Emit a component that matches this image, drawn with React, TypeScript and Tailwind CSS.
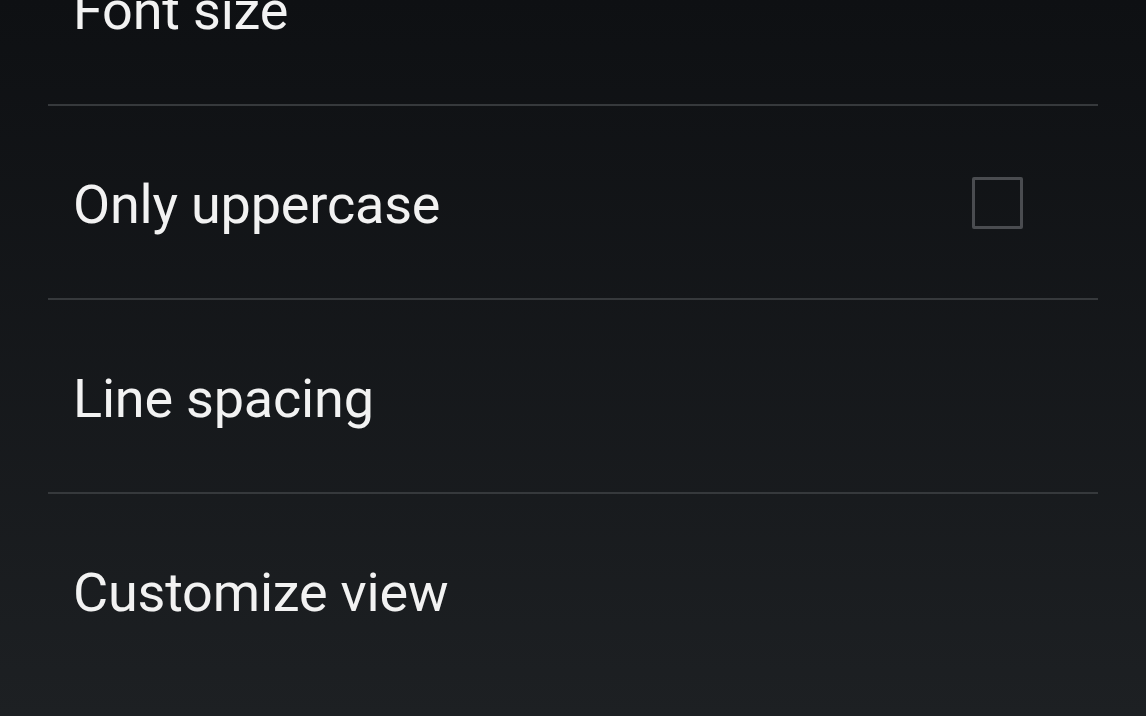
import React from "react";

const rows: { label: string; checkbox?: boolean }[] = [
  { label: "Font size" },
  { label: "Only uppercase", checkbox: true },
  { label: "Line spacing" },
  { label: "Customize view" },
];

export default function App() {
  return (
    <div className="w-[1146px] h-[716px] overflow-hidden bg-gradient-to-b from-[#0e1013] to-[#1d2023] font-['Roboto',sans-serif]">
      <div className="-mt-[88px] px-[48px] flex flex-col">
        {rows.map((r, i) => (
          <div key={r.label} className="flex flex-col">
            <div className="h-[192px] flex items-center justify-between pl-[25px] pr-[75px] pt-[6px]">
              <span className="text-[54px] text-[#f2f2f2] leading-none tracking-[-0.2px]">{r.label}</span>
              {r.checkbox && (
                <div className="w-[51px] h-[52px] border-[3px] border-[#4a4c50] rounded-[2px] -mt-[4px]" />
              )}
            </div>
            {i < rows.length - 1 && <div className="h-[2px] bg-[#36393c]" />}
          </div>
        ))}
      </div>
    </div>
  );
}
